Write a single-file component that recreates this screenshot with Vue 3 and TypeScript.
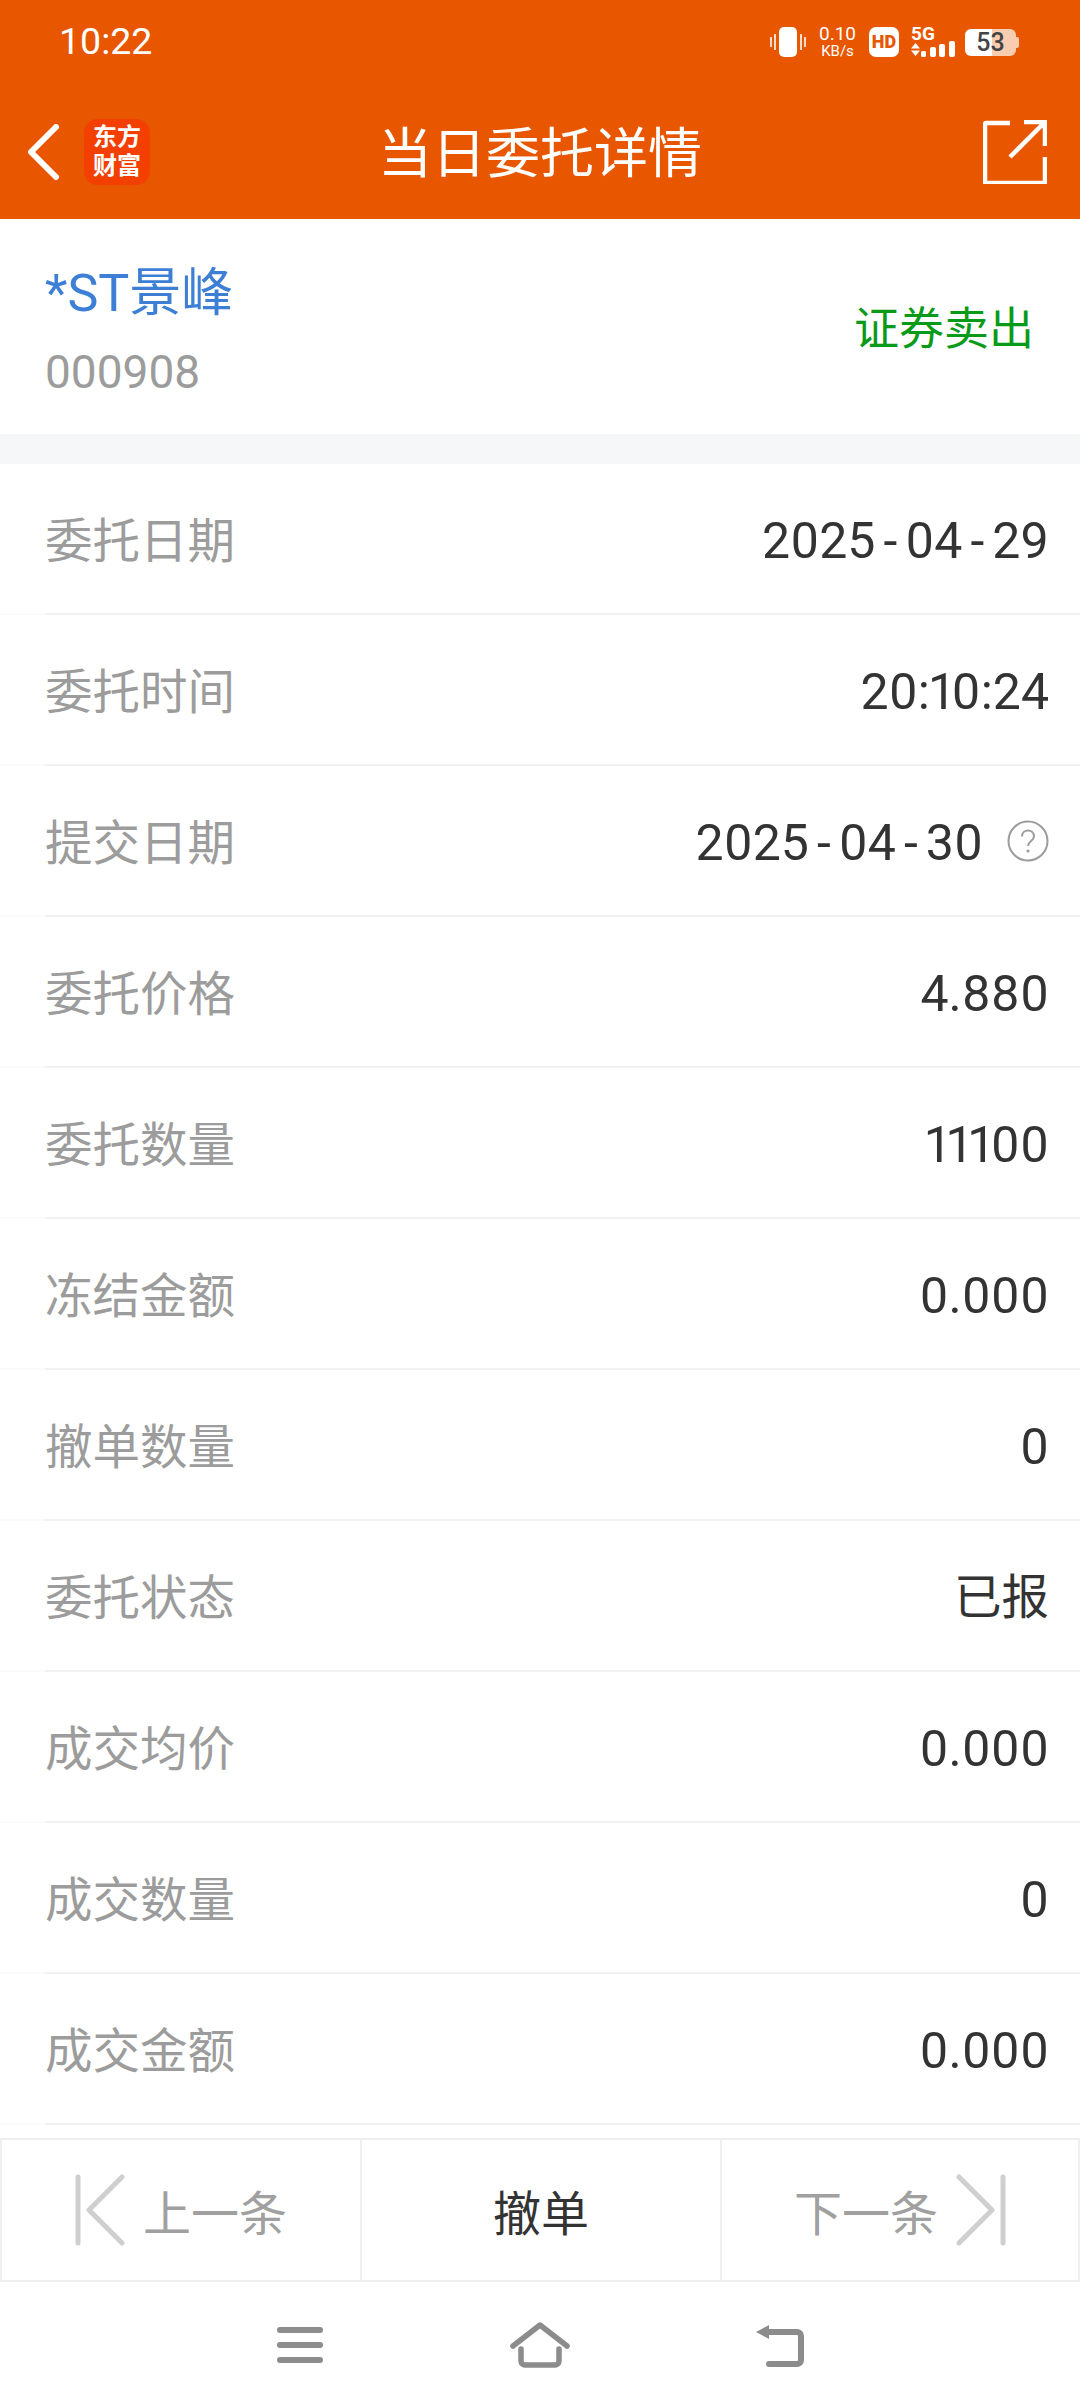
<template>
  <div class="page">
    <header class="top">
      <div class="status">
        <span class="clock">10:22</span>
        <div class="status-right">
          <svg class="vibrate" width="36" height="30" viewBox="0 0 36 30">
            <rect x="9" y="0" width="18" height="30" rx="5" fill="#fff" />
            <path d="M5 7v16M1 10v10M31 7v16M35 10v10" stroke="#fff" stroke-opacity=".8" stroke-width="2" />
          </svg>
          <div class="speed"><span>0.10</span><span class="speed-unit">KB/s</span></div>
          <span class="hd">HD</span>
          <div class="net">
            <span class="net-5g">5G</span>
            <svg class="net-arrows" width="9" height="13" viewBox="0 0 9 13">
              <path d="M4.500 0L9 5.500H0zM4.500 13L0 7.500h9z" fill="#fff" />
            </svg>
            <svg class="net-bars" width="34" height="16" viewBox="0 0 34 16">
              <rect x="0" y="10" width="5" height="6" rx="1.500" fill="#fff" />
              <rect x="9" y="6" width="6" height="10" rx="2" fill="#fff" />
              <rect x="18" y="3" width="6" height="13" rx="2" fill="#fff" />
              <rect x="28" y="0" width="6" height="16" rx="2" fill="#fff" />
            </svg>
          </div>
          <div class="battery">
            <span>53</span>
            <i class="battery-cap"></i>
          </div>
        </div>
      </div>
      <div class="nav">
        <div class="nav-left">
          <svg width="34" height="56" viewBox="0 0 34 56">
            <path d="M30 3L5 28l25 25" fill="none" stroke="#fff" stroke-width="6" stroke-linecap="round" stroke-linejoin="round" />
          </svg>
          <div class="logo">东方<br />财富</div>
        </div>
        <h1 class="title">当日委托详情</h1>
        <svg class="share" width="64" height="64" viewBox="0 0 64 64">
          <path d="M27 3H3a1 1 0 0 0-1 1v58a1 1 0 0 0 1 1h58a1 1 0 0 0 1-1V37" fill="none" stroke="#fff" stroke-width="4.500" />
          <path d="M27 37L61 3M41 2h21v24" fill="none" stroke="#fff" stroke-width="4.500" />
        </svg>
      </div>
    </header>

    <section class="stock">
      <div>
        <div class="stock-name">*ST景峰</div>
        <div class="stock-code">000908</div>
      </div>
      <div class="stock-side">证券卖出</div>
    </section>

    <div class="gap"></div>

    <ul class="rows">
      <li v-for="row in rows" :key="row.label" class="row">
        <span class="row-label">{{ row.label }}</span>
        <span class="row-value" :class="{ 'row-value--cjk': row.cjk }">
          <span>
            <template v-for="(part, i) in row.value.split('-')" :key="i">
              <span v-if="i" class="dash">-</span>{{ part }}
            </template>
          </span>
          <svg v-if="row.help" class="help" width="42" height="42" viewBox="0 0 42 42">
            <circle cx="21" cy="21" r="19.500" fill="none" stroke="#9c9c9c" stroke-width="2" />
            <path d="M15 16.500c0-8 12-8 12 0 0 4.500-6 4.500-6 9.500" fill="none" stroke="#9c9c9c" stroke-width="2" />
            <circle cx="21" cy="31" r="1.600" fill="#9c9c9c" />
          </svg>
        </span>
      </li>
    </ul>

    <div class="actions">
      <button class="action action--off">
        <svg width="50" height="72" viewBox="0 0 50 72">
          <path d="M3 3v66M47 3L14 36l33 33" fill="none" stroke="#cfcfcf" stroke-width="5" stroke-linecap="round" stroke-linejoin="round" />
        </svg>
        <span>上一条</span>
      </button>
      <button class="action">撤单</button>
      <button class="action action--off">
        <span>下一条</span>
        <svg width="50" height="72" viewBox="0 0 50 72">
          <path d="M47 3v66M3 3l33 33L3 69" fill="none" stroke="#cfcfcf" stroke-width="5" stroke-linecap="round" stroke-linejoin="round" />
        </svg>
      </button>
    </div>

    <footer class="sys">
      <svg width="46" height="38" viewBox="0 0 46 38">
        <path d="M3 4h40M3 19h40M3 34h40" stroke="#8c8c8c" stroke-width="6" stroke-linecap="round" />
      </svg>
      <svg width="60" height="46" viewBox="0 0 60 46">
        <path d="M3 24L30 3l27 21" fill="none" stroke="#8c8c8c" stroke-width="5.500" stroke-linecap="round" stroke-linejoin="round" />
        <path d="M11 27v12a4 4 0 0 0 4 4h30a4 4 0 0 0 4-4V27" fill="none" stroke="#8c8c8c" stroke-width="5.500" stroke-linecap="round" />
      </svg>
      <svg width="50" height="44" viewBox="0 0 50 44">
        <path d="M12 9h30a4 4 0 0 1 4 4v24a4 4 0 0 1-4 4H14" fill="none" stroke="#8c8c8c" stroke-width="6" stroke-linecap="round" />
        <path d="M1 9l13-7v14z" fill="#8c8c8c" />
      </svg>
    </footer>
  </div>
</template>

<script setup lang="ts">
interface Row {
  label: string;
  value: string;
  help?: boolean;
  cjk?: boolean;
}

const rows: Row[] = [
  { label: "委托日期", value: "2025-04-29" },
  { label: "委托时间", value: "20:10:24" },
  { label: "提交日期", value: "2025-04-30", help: true },
  { label: "委托价格", value: "4.880" },
  { label: "委托数量", value: "11100" },
  { label: "冻结金额", value: "0.000" },
  { label: "撤单数量", value: "0" },
  { label: "委托状态", value: "已报", cjk: true },
  { label: "成交均价", value: "0.000" },
  { label: "成交数量", value: "0" },
  { label: "成交金额", value: "0.000" },
];
</script>

<style>
html,
body {
  margin: 0;
  background: #fff;
}
</style>

<style scoped>
.page {
  width: 1080px;
  height: 2408px;
  display: flex;
  flex-direction: column;
  overflow: hidden;
  background: #fff;
  color: #333;
  font-family: Roboto, "Noto Sans CJK SC", sans-serif;
}

.top {
  height: 219px;
  flex: none;
  background: #e85600;
  color: #fff;
  display: flex;
  flex-direction: column;
}

.status {
  height: 84px;
  padding: 0 61px 0 59px;
  display: flex;
  align-items: center;
  justify-content: space-between;
}

.clock {
  font-size: 37.500px;
  line-height: 1;
}

.status-right {
  display: flex;
  align-items: center;
}

.vibrate {
  margin-right: 14px;
}

.speed {
  display: flex;
  flex-direction: column;
  align-items: center;
  width: 35px;
  margin-right: 14px;
}

.speed > span:first-child {
  font-size: 19px;
  line-height: 18px;
}

.speed-unit {
  font-size: 15px;
  line-height: 17px;
}

.hd {
  width: 30px;
  height: 30px;
  border-radius: 7px;
  background: #fff;
  color: #e85600;
  font-size: 18px;
  font-weight: 900;
  line-height: 30px;
  text-align: center;
  margin-right: 12px;
}

.net {
  position: relative;
  width: 44px;
  height: 32px;
  margin-right: 10px;
}

.net-5g {
  position: absolute;
  left: 0;
  top: -1px;
  font-size: 19px;
  font-weight: 700;
  line-height: 18px;
}

.net-arrows {
  position: absolute;
  left: 0;
  top: 17px;
}

.net-bars {
  position: absolute;
  left: 10px;
  top: 15px;
}

.battery {
  position: relative;
  width: 51px;
  height: 27px;
  border-radius: 6px;
  background: linear-gradient(90deg, #fff 53%, #f9cdb0 53%);
  color: #444;
  font-size: 25px;
  font-weight: 500;
  line-height: 27px;
  text-align: center;
  margin-right: 3px;
}

.battery-cap {
  position: absolute;
  right: -3px;
  top: 8px;
  width: 3px;
  height: 11px;
  border-radius: 0 2px 2px 0;
  background: #f9cdb0;
}

.nav {
  flex: 1;
  display: flex;
  align-items: center;
  position: relative;
  padding: 0 30px 0 26px;
  justify-content: space-between;
}

.nav-left {
  display: flex;
  align-items: center;
  gap: 24px;
}

.logo {
  width: 66px;
  height: 66px;
  border-radius: 14px;
  background: #f33f00;
  color: #fff;
  font-size: 24px;
  font-weight: 700;
  line-height: 29px;
  text-align: center;
  padding-top: 4px;
  box-sizing: border-box;
}

.title {
  position: absolute;
  left: 0;
  right: 0;
  top: 0;
  bottom: 0;
  margin: 0;
  font-size: 54px;
  font-weight: 400;
  line-height: 142px;
  text-align: center;
}

.share {
  margin-right: 3px;
}

.stock {
  height: 215px;
  flex: none;
  box-sizing: border-box;
  padding: 42px 14px 0 45px;
  display: flex;
  justify-content: space-between;
  align-items: flex-start;
}

.stock-name {
  color: #3c7fd4;
  font-size: 52px;
  line-height: 66px;
}

.stock-code {
  color: #9c9c9c;
  font-size: 46px;
  line-height: 50px;
  margin-top: 20px;
}

.stock-side {
  color: #0a9a1a;
  font-size: 45px;
  line-height: 56px;
  padding: 41px 0 0;
  margin-right: 32px;
}

.gap {
  height: 30px;
  flex: none;
  background: #f6f7f9;
}

.rows {
  margin: 0;
  padding: 0;
  list-style: none;
  flex: none;
}

.row {
  height: 151px;
  box-sizing: border-box;
  padding: 0 31px 0 45px;
  display: flex;
  align-items: center;
  justify-content: space-between;
  position: relative;
  border-bottom: 2px solid #fafafa;
}

.row::after {
  content: "";
  position: absolute;
  left: 45px;
  right: 0;
  bottom: -2px;
  height: 2px;
  background: #f1f1f1;
}

.row-label {
  color: #9c9c9c;
  font-size: 47.500px;
  padding-bottom: 3px;
}

.row-value {
  display: flex;
  align-items: center;
  gap: 24px;
  font-size: 50px;
  font-variant-numeric: proportional-nums;
}

.row-value > span {
  position: relative;
  top: 2px;
}

.row-value--cjk {
  font-size: 47.500px;
  padding-bottom: 8px;
}

.dash {
  margin: 0 8px;
}

.actions {
  margin-top: 13px;
  height: 144px;
  flex: none;
  display: grid;
  grid-template-columns: repeat(3, 1fr);
  border-top: 2px solid #f0f0f0;
  border-bottom: 2px solid #f0f0f0;
  box-sizing: border-box;
}

.action {
  background: #fff;
  border: 0;
  border-left: 2px solid #f0f0f0;
  padding: 0;
  font: inherit;
  font-size: 48px;
  color: #333;
  display: flex;
  align-items: center;
  justify-content: center;
  gap: 18px;
}

.action:last-child {
  border-right: 2px solid #f0f0f0;
}

.action--off {
  color: #a0a0a0;
}

.sys {
  flex: 1;
  display: grid;
  grid-template-columns: repeat(3, 240px);
  justify-content: center;
  justify-items: center;
  align-items: center;
}
</style>
